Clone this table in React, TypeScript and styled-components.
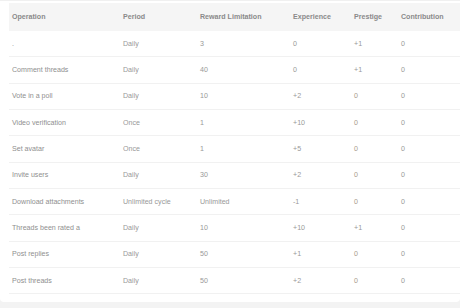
import React from 'react';
import styled, { createGlobalStyle } from 'styled-components';

interface RuleRow {
  operation: string;
  period: string;
  limit: string;
  experience: string;
  prestige: string;
  contribution: string;
}

const rows: RuleRow[] = [
  { operation: '.', period: 'Daily', limit: '3', experience: '0', prestige: '+1', contribution: '0' },
  { operation: 'Comment threads', period: 'Daily', limit: '40', experience: '0', prestige: '+1', contribution: '0' },
  { operation: 'Vote in a poll', period: 'Daily', limit: '10', experience: '+2', prestige: '0', contribution: '0' },
  { operation: 'Video verification', period: 'Once', limit: '1', experience: '+10', prestige: '0', contribution: '0' },
  { operation: 'Set avatar', period: 'Once', limit: '1', experience: '+5', prestige: '0', contribution: '0' },
  { operation: 'Invite users', period: 'Daily', limit: '30', experience: '+2', prestige: '0', contribution: '0' },
  { operation: 'Download attachments', period: 'Unlimited cycle', limit: 'Unlimited', experience: '-1', prestige: '0', contribution: '0' },
  { operation: 'Threads been rated a', period: 'Daily', limit: '10', experience: '+10', prestige: '+1', contribution: '0' },
  { operation: 'Post replies', period: 'Daily', limit: '50', experience: '+1', prestige: '0', contribution: '0' },
  { operation: 'Post threads', period: 'Daily', limit: '50', experience: '+2', prestige: '0', contribution: '0' },
];

const GlobalStyle = createGlobalStyle`
  body {
    margin: 0;
    background: #f3f3f3;
    font-family: "Liberation Sans", Arial, sans-serif;
  }
`;

const Page = styled.div`
  width: 460px;
  height: 308px;
  overflow: hidden;
  background: #f3f3f3;
`;

const Card = styled.div`
  background: #fff;
  border-top: 1px solid #f0f0f0;
  border-radius: 0 0 4px 4px;
  padding: 2px 0 8px 9px;
`;

const Table = styled.table`
  width: 100%;
  border-collapse: collapse;
  table-layout: fixed;
  font-size: 7.1px;
`;

const Head = styled.th<{ $w?: number }>`
  width: ${({ $w }) => ($w ? `${$w}px` : 'auto')};
  height: 28px;
  padding: 0 0 0 3px;
  background: #f5f5f5;
  color: #8a8a8a;
  font-weight: bold;
  text-align: left;
`;

const Row = styled.tr`
  border-bottom: 1px solid #f1f1f1;
`;

const Cell = styled.td<{ $tint?: boolean }>`
  height: 25.35px;
  padding: 0 0 0 3px;
  color: ${({ $tint }) => ($tint ? '#a89a8c' : '#999')};
  white-space: nowrap;
  overflow: hidden;
`;

const OpCell = styled(Cell)`
  color: #8f8f8f;
`;

export default function App() {
  return (
    <Page>
      <GlobalStyle />
      <Card>
        <Table>
          <thead>
            <tr>
              <Head $w={108}>Operation</Head>
              <Head $w={74}>Period</Head>
              <Head $w={90}>Reward Limitation</Head>
              <Head $w={58}>Experience</Head>
              <Head $w={44}>Prestige</Head>
              <Head>Contribution</Head>
            </tr>
          </thead>
          <tbody>
            {rows.map((r, i) => (
              <Row key={i}>
                <OpCell>{r.operation}</OpCell>
                <Cell>{r.period}</Cell>
                <Cell>{r.limit}</Cell>
                <Cell>{r.experience}</Cell>
                <Cell $tint={r.prestige === '0'}>{r.prestige}</Cell>
                <Cell>{r.contribution}</Cell>
              </Row>
            ))}
          </tbody>
        </Table>
      </Card>
    </Page>
  );
}
